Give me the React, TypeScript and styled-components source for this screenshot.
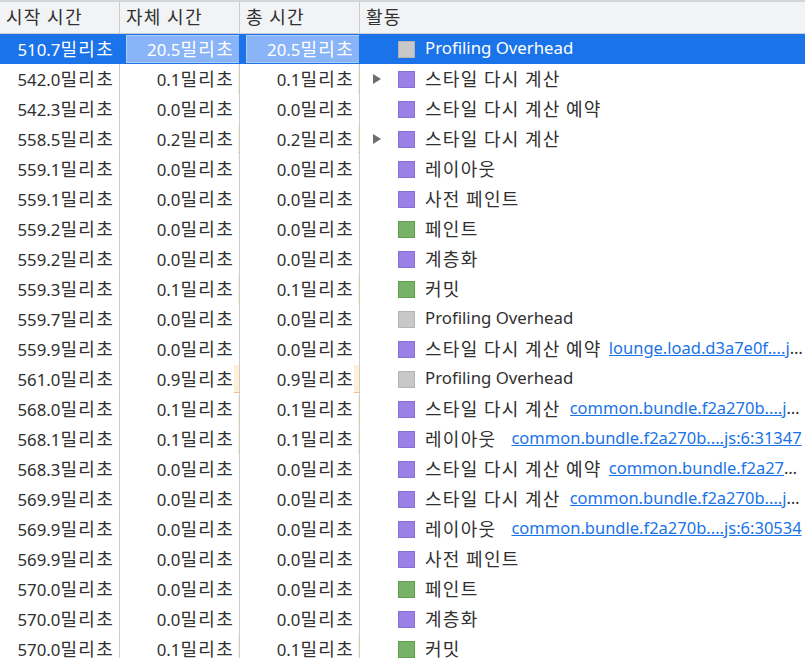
import React from "react";
import styled, { createGlobalStyle, css } from "styled-components";

const Global = createGlobalStyle`
  html, body { margin: 0; padding: 0; background: #fff; }
  body { font-family: "Noto Sans", "Noto Sans CJK KR", sans-serif; }
`;

const COLS = "120px 120px 120px 1fr";

const Table = styled.div`
  width: 805px;
  height: 658px;
  overflow: hidden;
  border-top: 2px solid #d3d5d8;
  box-sizing: border-box;
  font-size: 16.8px;
  color: #303030;
`;

const Ko = styled.span`
  font-family: "Noto Sans CJK KR", sans-serif;
  font-size: 18px;
  letter-spacing: 1.3px;
`;

const Header = styled.div`
  display: grid;
  grid-template-columns: ${COLS};
  height: 32px;
  background: #f1f3f4;
  border-bottom: 1px solid #cbcdd1;
  box-sizing: border-box;
`;

const HeaderCell = styled.div<{ $last?: boolean }>`
  display: flex;
  align-items: center;
  padding: 0 0 4px 6px;
  border-right: ${(p) => (p.$last ? "none" : "1px solid #cbcdd1")};
  color: #303030;
  white-space: nowrap;
`;

const Row = styled.div<{ $selected?: boolean }>`
  display: grid;
  grid-template-columns: ${COLS};
  height: 30px;
  ${(p) =>
    p.$selected &&
    css`
      background: #1a73e8;
      color: #fff;
    `}
`;

const NumCell = styled.div<{ $selected?: boolean }>`
  position: relative;
  display: flex;
  align-items: center;
  justify-content: flex-end;
  padding: 0 5px 3px 0;
  border-right: 1px solid ${(p) => (p.$selected ? "#1a73e8" : "#cbcdd1")};
  white-space: nowrap;
`;

const Bar = styled.div<{ $selected?: boolean }>`
  position: absolute;
  right: 0;
  top: 1px;
  bottom: 1px;
  max-width: calc(100% - 6px);
  box-sizing: border-box;
  ${(p) =>
    p.$selected
      ? css`
          background: #8ab4f8;
          border: 1px solid #aecbfa;
          border-right: none;
        `
      : css`
          background: #fdf0d5;
          border-bottom: 1px solid #f2c27a;
        `}
`;

const NumText = styled.span`
  position: relative;
`;

const ActivityCell = styled.div`
  display: flex;
  align-items: center;
  padding: 0 0 0 13px;
  white-space: nowrap;
  overflow: hidden;
  min-width: 0;
`;

const Arrow = styled.div<{ $show?: boolean }>`
  width: 0;
  height: 0;
  border-top: 5px solid transparent;
  border-bottom: 5px solid transparent;
  border-left: 8px solid ${(p) => (p.$show ? "#6e6e6e" : "transparent")};
  margin: 0 17px 1px 0;
  flex: none;
`;

const SWATCH = {
  grey: ["#c8c8c8", "#b4b4b4"],
  purple: ["#9b81e6", "#8a6fd4"],
  green: ["#76b267", "#5f9e50"],
} as const;

const Swatch = styled.div<{ $color: keyof typeof SWATCH }>`
  width: 17px;
  height: 17px;
  box-sizing: border-box;
  background: ${(p) => SWATCH[p.$color][0]};
  border: 1px solid ${(p) => SWATCH[p.$color][1]};
  margin-right: 10px;
  flex: none;
`;

const Name = styled.span`
  flex: none;
  padding-bottom: 3px;
`;

const SourceWrap = styled.span<{ $gap: number }>`
  margin-left: ${(p) => p.$gap}px;
  padding-bottom: 3px;
  overflow: hidden;
  text-overflow: ellipsis;
  white-space: nowrap;
  min-width: 0;
  flex: 1 1 auto;
  font-size: 16.5px;
`;

const SourceLink = styled.a`
  color: #1a73e8;
  text-decoration: underline;
  cursor: pointer;
`;

function T({ s }: { s: string }) {
  const parts = s.split(/([\uac00-\ud7a3]+(?: [\uac00-\ud7a3]+)*)/);
  return (
    <>
      {parts.map((p, i) =>
        /[\uac00-\ud7a3]/.test(p) ? <Ko key={i}>{p}</Ko> : p ? <React.Fragment key={i}>{p}</React.Fragment> : null
      )}
    </>
  );
}

type Item = {
  start: string;
  self: number;
  total: number;
  arrow?: boolean;
  color: keyof typeof SWATCH;
  name: string;
  link?: string;
  gap?: number;
};

const rows: Item[] = [
  { start: "510.7", self: 20.5, total: 20.5, color: "grey", name: "Profiling Overhead" },
  { start: "542.0", self: 0.1, total: 0.1, arrow: true, color: "purple", name: "스타일 다시 계산" },
  { start: "542.3", self: 0.0, total: 0.0, color: "purple", name: "스타일 다시 계산 예약" },
  { start: "558.5", self: 0.2, total: 0.2, arrow: true, color: "purple", name: "스타일 다시 계산" },
  { start: "559.1", self: 0.0, total: 0.0, color: "purple", name: "레이아웃" },
  { start: "559.1", self: 0.0, total: 0.0, color: "purple", name: "사전 페인트" },
  { start: "559.2", self: 0.0, total: 0.0, color: "green", name: "페인트" },
  { start: "559.2", self: 0.0, total: 0.0, color: "purple", name: "계층화" },
  { start: "559.3", self: 0.1, total: 0.1, color: "green", name: "커밋" },
  { start: "559.7", self: 0.0, total: 0.0, color: "grey", name: "Profiling Overhead" },
  { start: "559.9", self: 0.0, total: 0.0, color: "purple", name: "스타일 다시 계산 예약", link: "lounge.load.d3a7e0f....js:6:28841", gap: 7 },
  { start: "561.0", self: 0.9, total: 0.9, color: "grey", name: "Profiling Overhead" },
  { start: "568.0", self: 0.1, total: 0.1, color: "purple", name: "스타일 다시 계산", link: "common.bundle.f2a270b....js:6:31347", gap: 9 },
  { start: "568.1", self: 0.1, total: 0.1, color: "purple", name: "레이아웃", link: "common.bundle.f2a270b....js:6:31347", gap: 15 },
  { start: "568.3", self: 0.0, total: 0.0, color: "purple", name: "스타일 다시 계산 예약", link: "common.bundle.f2a270b....js:6:30534", gap: 7 },
  { start: "569.9", self: 0.0, total: 0.0, color: "purple", name: "스타일 다시 계산", link: "common.bundle.f2a270b....js:6:30534", gap: 9 },
  { start: "569.9", self: 0.0, total: 0.0, color: "purple", name: "레이아웃", link: "common.bundle.f2a270b....js:6:30534", gap: 15 },
  { start: "569.9", self: 0.0, total: 0.0, color: "purple", name: "사전 페인트" },
  { start: "570.0", self: 0.0, total: 0.0, color: "green", name: "페인트" },
  { start: "570.0", self: 0.0, total: 0.0, color: "purple", name: "계층화" },
  { start: "570.0", self: 0.1, total: 0.1, color: "green", name: "커밋" },
];

const MAX = 20.5;

function Num({ value, selected }: { value: number; selected: boolean }) {
  return (
    <NumCell $selected={selected}>
      {value > 0 && <Bar $selected={selected} style={{ width: `${(value / MAX) * 119}px` }} />}
      <NumText>
        {value.toFixed(1)}
        <Ko>밀리초</Ko>
      </NumText>
    </NumCell>
  );
}

export default function App() {
  return (
    <>
      <Global />
      <Table>
        <Header>
          <HeaderCell><Ko>시작 시간</Ko></HeaderCell>
          <HeaderCell><Ko>자체 시간</Ko></HeaderCell>
          <HeaderCell><Ko>총 시간</Ko></HeaderCell>
          <HeaderCell $last><Ko>활동</Ko></HeaderCell>
        </Header>
        {rows.map((r, i) => {
          const sel = i === 0;
          return (
            <Row key={i} $selected={sel}>
              <NumCell $selected={sel}>
                <NumText>
                  {r.start}
                  <Ko>밀리초</Ko>
                </NumText>
              </NumCell>
              <Num value={r.self} selected={sel} />
              <Num value={r.total} selected={sel} />
              <ActivityCell>
                <Arrow $show={r.arrow} />
                <Swatch $color={r.color} />
                <Name><T s={r.name} /></Name>
                {r.link && (
                  <SourceWrap $gap={r.gap ?? 8}>
                    <SourceLink>{r.link}</SourceLink>
                  </SourceWrap>
                )}
              </ActivityCell>
            </Row>
          );
        })}
      </Table>
    </>
  );
}
